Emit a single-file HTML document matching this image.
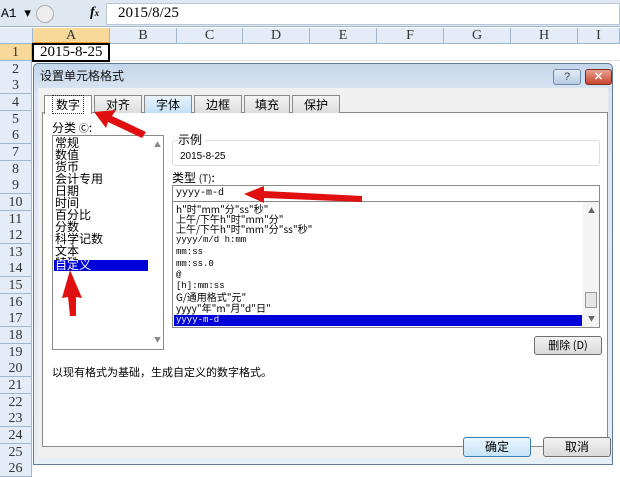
<!DOCTYPE html><html><head><meta charset="utf-8"><style>
*{margin:0;padding:0;box-sizing:border-box}
body{width:620px;height:467px;overflow:hidden;background:#fff;font-family:"Liberation Sans","Noto Sans CJK SC",sans-serif;font-size:12px;position:relative}
.a{position:absolute}
.cj{font-family:"Noto Sans CJK SC",sans-serif}
.mono{font-family:"Liberation Mono","Noto Sans CJK SC",monospace}
.serif{font-family:"Liberation Serif","Noto Serif CJK SC",serif}
.row{position:absolute;left:0;width:32px;height:17px;background:#e4ecf7;border-bottom:1px solid #9eb6ce;border-right:1px solid #9eb6ce;text-align:center;font:14px "Liberation Serif",serif;color:#333;line-height:17px}
.col{position:absolute;top:28px;height:16px;background:#e4ecf7;border-right:1px solid #9eb6ce;border-bottom:1px solid #9eb6ce;text-align:center;font:14px "Liberation Serif",serif;line-height:16px;color:#333}
.tab{position:absolute;top:95px;height:18px;border:1px solid #8a8a8a;border-bottom:none;background:linear-gradient(#f4f4f4,#dcdcdc);text-align:center;font-size:12px;line-height:17px}
.li{position:absolute;left:2px;font-size:12px;line-height:12px;white-space:nowrap}
.tl{position:absolute;left:3px;font-size:10px;line-height:11px;white-space:nowrap}
.btn{position:absolute;border:1px solid #707070;border-radius:3px;background:linear-gradient(#f2f2f2,#dadada);text-align:center;font-size:12px}
</style></head><body>
<div class="a" style="left:0;top:0;width:620px;height:27px;background:#dfe7f1;border-bottom:1px solid #9eb6ce"></div>
<div class="a mono" style="left:1px;top:6px;font-size:13px">A1 ▾</div>
<div class="a" style="left:36px;top:5px;width:18px;height:18px;border:1px solid #b0b0b0;border-radius:9px;background:#eee"></div>
<div class="a serif" style="left:90px;top:5px;font-size:14px;font-style:italic;font-weight:bold">f<span style="font-size:9px">x</span></div>
<div class="a" style="left:106px;top:3px;width:514px;height:22px;background:#fff;border:1px solid #b8c6d6"></div>
<div class="a serif" style="left:118px;top:5px;font-size:15px">2015/8/25</div>
<div class="a" style="left:0;top:28px;width:33px;height:16px;background:#e4ecf7;border-right:1px solid #9eb6ce;border-bottom:1px solid #9eb6ce"></div>
<div class="col" style="left:33px;width:77px;background:#f9d99a;border-bottom:2px solid #f0a030">A</div>
<div class="col" style="left:110px;width:67px">B</div>
<div class="col" style="left:177px;width:66px">C</div>
<div class="col" style="left:243px;width:67px">D</div>
<div class="col" style="left:310px;width:67px">E</div>
<div class="col" style="left:377px;width:67px">F</div>
<div class="col" style="left:444px;width:67px">G</div>
<div class="col" style="left:511px;width:67px">H</div>
<div class="col" style="left:578px;width:42px">I</div>
<div class="a" style="left:33px;top:44px;width:587px;height:17px;border-bottom:1px solid #dadcdd"></div>
<div class="a" style="left:32px;top:43px;width:78px;height:19px;border:2px solid #000"></div>
<div class="a serif" style="left:40px;top:44px;font-size:15px">2015-8-25</div>
<div id="rows"></div>
<script>
var h='';for(var i=1;i<=26;i++){var t=44+(i-1)*16.65;h+='<div class="row" style="top:'+t+'px;'+(i==1?'background:#f9d99a;':'')+'">'+i+'</div>'}document.getElementById('rows').innerHTML=h;
</script>
<!-- dialog -->
<div class="a" style="left:33px;top:63px;width:580px;height:402px;background:linear-gradient(#c3d6ea,#dbe6f3 30px,#e6eef7);border:1px solid #5f7a96;border-radius:5px 5px 0 0"></div>
<div class="a cj" style="left:40px;top:67px;font-size:12px;color:#111">设置单元格格式</div>
<div class="a" style="left:553px;top:69px;width:28px;height:16px;border:1px solid #6d87a8;border-radius:3px;background:linear-gradient(#e3ecf7,#b8cbe2);text-align:center;font-size:11px;line-height:14px;color:#345">?</div>
<div class="a" style="left:585px;top:69px;width:27px;height:16px;border:1px solid #7b2a22;border-radius:3px;background:linear-gradient(#e8a08f,#c9442e);text-align:center;font-size:11px;line-height:14px;color:#fff;font-weight:bold">✕</div>
<div class="a" style="left:38px;top:88px;width:570px;height:370px;background:#f0f0f0"></div>
<div class="a" style="left:42px;top:112px;width:566px;height:335px;background:#fff;border:1px solid #8a8a8a"></div>
<div class="tab cj" style="left:44px;width:48px;background:#fff;height:19px"><span style="border:1px dotted #333;padding:0 3px">数字</span></div>
<div class="tab cj" style="left:94px;width:48px">对齐</div>
<div class="tab cj" style="left:144px;width:48px;background:linear-gradient(#e8f3fc,#c4e0f6)">字体</div>
<div class="tab cj" style="left:194px;width:48px">边框</div>
<div class="tab cj" style="left:244px;width:46px">填充</div>
<div class="tab cj" style="left:292px;width:48px">保护</div>
<div class="a cj" style="left:52px;top:119px;font-size:12px">分类 <span style="font-size:10px">Ⓒ</span>:</div>
<div class="a cj" style="left:52px;top:135px;width:112px;height:215px;border:1px solid #8a8a8a;background:#fff">
<div class="li" style="top:1px">常规</div><div class="li" style="top:13px">数值</div><div class="li" style="top:25px">货币</div><div class="li" style="top:37px">会计专用</div><div class="li" style="top:49px">日期</div><div class="li" style="top:61px">时间</div><div class="li" style="top:73px">百分比</div><div class="li" style="top:85px">分数</div><div class="li" style="top:97px">科学记数</div><div class="li" style="top:109px">文本</div><div class="li" style="top:121px">特殊</div>
<div class="a" style="left:1px;top:124px;width:94px;height:11px;background:#0000d8"></div><div class="li" style="top:123px;color:#fff">自定义</div>
<div class="a" style="right:2px;top:4px;font-size:7px;color:#888">▲</div><div class="a" style="right:2px;bottom:4px;font-size:7px;color:#888">▼</div>
</div>
<div class="a" style="left:172px;top:140px;width:428px;height:26px;border:1px solid #dcdcdc;border-radius:3px"></div>
<div class="a cj" style="left:178px;top:131px;font-size:12px;background:#fff;padding-right:3px">示例</div>
<div class="a" style="left:180px;top:151px;font-size:10px">2015-8-25</div>
<div class="a cj" style="left:172px;top:169px;font-size:12px">类型 <span style="font-size:10px">(T)</span>:</div>
<div class="a mono" style="left:172px;top:185px;width:428px;height:17px;border:1px solid #8a8a8a;font-size:10px;padding:2px 3px">yyyy-m-d</div>
<div class="a cj" style="left:172px;top:202px;width:428px;height:126px;border:1px solid #8a8a8a;border-top:none">
<div class="tl" style="top:1px">h"时"mm"分"ss"秒"</div>
<div class="tl" style="top:11px">上午/下午h"时"mm"分"</div>
<div class="tl" style="top:21px">上午/下午h"时"mm"分"ss"秒"</div>
<div class="tl mono" style="top:33px;font-size:9px">yyyy/m/d h:mm</div>
<div class="tl mono" style="top:45px;font-size:9px">mm:ss</div>
<div class="tl mono" style="top:57px;font-size:9px">mm:ss.0</div>
<div class="tl mono" style="top:68px;font-size:9px">@</div>
<div class="tl mono" style="top:79px;font-size:9px">[h]:mm:ss</div>
<div class="tl" style="top:89px">G/通用格式"元"</div>
<div class="tl" style="top:100px">yyyy"年"m"月"d"日"</div>
<div class="a" style="left:1px;top:113px;width:408px;height:11px;background:#0000d8"></div>
<div class="tl mono" style="top:113px;color:#fff;font-size:9px">yyyy-m-d</div>
<div class="a" style="right:0;top:0;width:16px;height:125px;background:#f4f4f4"></div>
<div class="a" style="right:4px;top:4px;font-size:7px;color:#666">▲</div>
<div class="a" style="right:2px;top:90px;width:12px;height:16px;border:1px solid #999;background:#e6e6e6"></div>
<div class="a" style="right:4px;top:112px;font-size:7px;color:#666">▼</div>
</div>
<div class="btn cj" style="left:534px;top:336px;width:68px;height:19px;line-height:17px;font-size:11px">删除 (D)</div>
<div class="a cj" style="left:52px;top:364px;font-size:11px">以现有格式为基础，生成自定义的数字格式。</div>
<div class="btn cj" style="left:463px;top:437px;width:68px;height:20px;line-height:18px;border-color:#3c7fb1;background:linear-gradient(#eaf6fd,#c6e3f7)">确定</div>
<div class="btn cj" style="left:543px;top:437px;width:68px;height:20px;line-height:18px">取消</div>
<!-- arrows -->
<svg class="a" style="left:0;top:0" width="620" height="467">
<g fill="#e01010">
<polygon points="94,112 116,110 112,116 146,132 142,138 108,122 106,128"/>
<polygon points="244,194 264,186 264,191 362,196 362,202 264,198 264,203"/>
<polygon points="70,270 62,298 68,297 70,316 76,316 76,297 82,298"/>
</g></svg>
</body></html>
